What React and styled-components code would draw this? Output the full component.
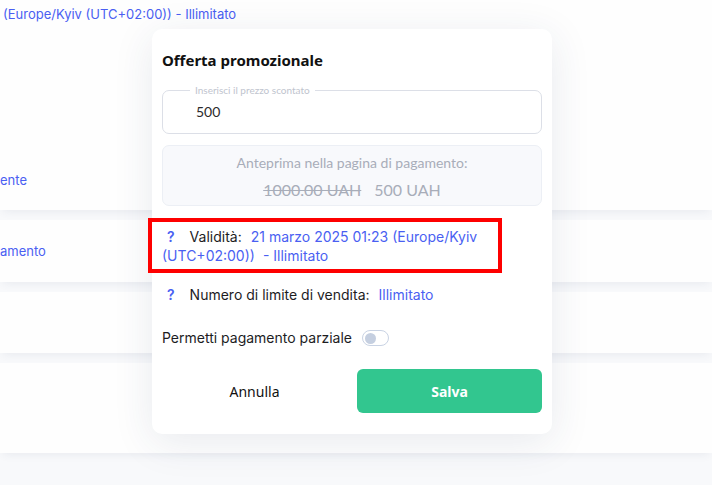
import styled, { createGlobalStyle } from "styled-components";

const GlobalStyle = createGlobalStyle`
    html, body {
        margin: 0;
        padding: 0;
        background: #f8f9fb;
        font-family: Inter, "Noto Sans", sans-serif;
    }
`;

export default function App() {
    return (
        <>
            <GlobalStyle />
            <Page>
                <Card height={210}>
                    <TopLink>(Europe/Kyiv (UTC+02:00)) - Illimitato</TopLink>
                    <Link>ente</Link>
                </Card>
                <Card height={62} center>
                    <Link>amento</Link>
                </Card>
                <Card height={61} />
                <Card height={90} />

                <Modal>
                    <Title>Offerta promozionale</Title>

                    <Field>
                        <Legend>Inserisci il prezzo scontato</Legend>
                        <Input defaultValue="500" />
                    </Field>

                    <Preview>
                        <PreviewTitle>Anteprima nella pagina di pagamento:</PreviewTitle>
                        <Prices>
                            <OldPrice>1000.00 UAH</OldPrice>
                            <span>500 UAH</span>
                        </Prices>
                    </Preview>

                    <InfoRow top={21}>
                        <Highlight />
                        <Help>?</Help>
                        <Label>Validità:</Label>
                        <Value>21 marzo 2025 01:23 (Europe/Kyiv</Value>{" "}
                        <Value>(UTC+02:00))</Value>
                        <Value spaced>- Illimitato</Value>
                    </InfoRow>

                    <InfoRow top={20}>
                        <Help>?</Help>
                        <Label>Numero di limite di vendita:</Label>
                        <Value>Illimitato</Value>
                    </InfoRow>

                    <SwitchRow>
                        Permetti pagamento parziale
                        <Toggle>
                            <Knob />
                        </Toggle>
                    </SwitchRow>

                    <Actions>
                        <CancelButton>Annulla</CancelButton>
                        <SaveButton>Salva</SaveButton>
                    </Actions>
                </Modal>
            </Page>
        </>
    );
};

const Page = styled.div`
    position: relative;
    height: 485px;
    overflow: hidden;
    display: flex;
    flex-direction: column;
    gap: 10px;
`;

const Card = styled.section`
    height: ${(props) => props.height}px;
    flex-shrink: 0;
    background: #fefefe;
    box-shadow: 0 5px 8px -3px rgba(60, 80, 120, 0.08);
    display: flex;
    flex-direction: column;
    justify-content: ${(props) => (props.center ? "center" : "space-between")};
    padding: ${(props) => (props.center ? "0" : "4px 0 20px")};
    box-sizing: border-box;
`;

const Link = styled.span`
    color: #4a5ff2;
    font-size: 13px;
    line-height: 20px;
`;

const TopLink = styled(Link)`
    padding-left: 3px;
`;

const Modal = styled.div`
    position: absolute;
    left: 152px;
    top: 29px;
    width: 400px;
    box-sizing: border-box;
    padding: 20px 10px 21px;
    background: #fff;
    border-radius: 10px;
    box-shadow: 0 8px 40px rgba(40, 60, 100, 0.1);
    display: flex;
    flex-direction: column;
`;

const Title = styled.h2`
    margin: 0;
    font-family: "Noto Sans", sans-serif;
    font-size: 15px;
    font-weight: 700;
    line-height: 22px;
    color: #111;
`;

const Field = styled.fieldset`
    margin: 12px 0 0;
    padding: 0 0 0 27px;
    border: 1px solid #dcdfe7;
    border-radius: 7px;
    height: 51px;
    box-sizing: border-box;
`;

const Legend = styled.legend`
    padding: 0 5px;
    margin-left: 0;
    font-family: Lato, sans-serif;
    font-size: 10px;
    line-height: 14px;
    color: #c0c4ce;
`;

const Input = styled.input`
    border: none;
    outline: none;
    padding: 0 0 0 6px;
    margin-top: 5px;
    width: 300px;
    font-family: Lato, sans-serif;
    font-size: 14px;
    line-height: 20px;
    color: #2b2b2b;
    background: transparent;
`;

const Preview = styled.div`
    margin-top: 11px;
    height: 61px;
    box-sizing: border-box;
    padding-top: 7px;
    background: #f8f9fc;
    border: 1px solid #eceff5;
    border-radius: 7px;
    display: flex;
    flex-direction: column;
    align-items: center;
    gap: 7px;
    font-family: Lato, sans-serif;
    color: #a8adb9;
`;

const PreviewTitle = styled.div`
    font-size: 14px;
    line-height: 20px;
`;

const Prices = styled.div`
    display: flex;
    gap: 13px;
    font-size: 16px;
    line-height: 20px;
`;

const OldPrice = styled.span`
    text-decoration: line-through;
`;

const InfoRow = styled.div`
    position: relative;
    margin-top: ${(props) => props.top}px;
    font-size: 14px;
    line-height: 19px;
    color: #1d1d1f;
`;

const Highlight = styled.span`
    position: absolute;
    left: -14px;
    right: 40px;
    top: -9px;
    bottom: -8px;
    border: 4px solid #fe0000;
    pointer-events: none;
`;

const Help = styled.span`
    display: inline-block;
    margin: 0 15px 0 5px;
    color: #4a5ff2;
    font-weight: 600;
`;

const Label = styled.span`
    margin-right: 9px;
    white-space: nowrap;
`;

const Value = styled.span`
    color: #4a5ff2;
    white-space: nowrap;
    margin-left: ${(props) => (props.spaced ? "8px" : "0")};
`;

const SwitchRow = styled.div`
    margin-top: 24px;
    display: flex;
    align-items: center;
    gap: 10px;
    font-size: 14px;
    line-height: 20px;
    color: #1d1d1f;
`;

const Toggle = styled.span`
    width: 27px;
    height: 16px;
    box-sizing: border-box;
    border: 1px solid #c9d3e4;
    border-radius: 8px;
    background: #fff;
    display: flex;
    align-items: center;
    padding-left: 2px;
`;

const Knob = styled.span`
    width: 11px;
    height: 11px;
    border-radius: 50%;
    background: #c5cfe0;
`;

const Actions = styled.div`
    margin-top: 21px;
    display: grid;
    grid-template-columns: 1fr 1fr;
    gap: 10px;
`;

const CancelButton = styled.button`
    height: 44px;
    border: none;
    background: transparent;
    font-family: "Noto Sans", sans-serif;
    font-size: 14px;
    color: #111;
    cursor: pointer;
`;

const SaveButton = styled.button`
    height: 44px;
    border: none;
    border-radius: 6px;
    background: #32c68f;
    color: #fff;
    font-family: "Noto Sans", sans-serif;
    font-size: 14px;
    font-weight: 700;
    cursor: pointer;
`;
